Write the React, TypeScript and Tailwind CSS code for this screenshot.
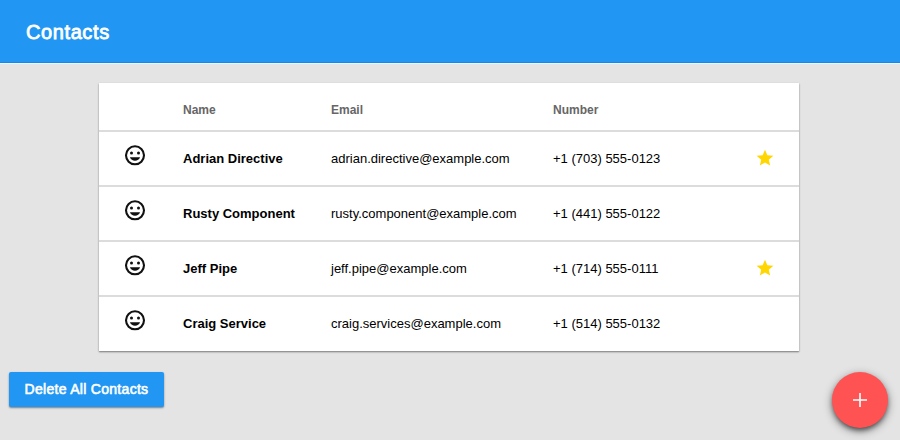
import { MdStar } from "react-icons/md";

interface Contact {
  name: string;
  email: string;
  phone: string;
  favorite: boolean;
}

const contacts: Contact[] = [
  { name: "Adrian Directive", email: "adrian.directive@example.com", phone: "+1 (703) 555-0123", favorite: true },
  { name: "Rusty Component", email: "rusty.component@example.com", phone: "+1 (441) 555-0122", favorite: false },
  { name: "Jeff Pipe", email: "jeff.pipe@example.com", phone: "+1 (714) 555-0111", favorite: true },
  { name: "Craig Service", email: "craig.services@example.com", phone: "+1 (514) 555-0132", favorite: false },
];

const columns = "grid grid-cols-[84px_148px_222px_192px_1fr]";

function Smiley() {
  return (
    <svg viewBox="0 0 24 24" className="mb-[7px] ml-6 size-6 fill-[#111]">
      <circle cx="12" cy="12.3" r="9" fill="none" stroke="#111" strokeWidth="2.1" />
      <circle cx="8.5" cy="9.9" r="1.5" />
      <circle cx="15.5" cy="9.9" r="1.5" />
      <path d="M12 17.8c2.33 0 4.31-1.46 5.11-3.5H6.89c.8 2.04 2.78 3.5 5.11 3.5z" />
    </svg>
  );
}

function ContactRow({ contact }: { contact: Contact }) {
  return (
    <div className={`${columns} h-[55px] items-center border-t-2 border-[#dcdcdc] text-[13px] text-black`}>
      <Smiley />
      <span className="font-bold">{contact.name}</span>
      <span>{contact.email}</span>
      <span>{contact.phone}</span>
      {contact.favorite && <MdStar className="mb-px ml-[10px] size-5 text-[#ffd600]" />}
    </div>
  );
}

export default function App() {
  return (
    <div className="flex h-[440px] w-[900px] flex-col overflow-hidden bg-[#e4e4e4] font-['Liberation_Sans',Arial,sans-serif]">
      <header className="flex h-[63px] shrink-0 items-center border-b border-[#1389ed] bg-[#2196f3] pl-[26px] pt-[2px] shadow-[0_1px_0_#f4f4f4]">
        <h1 className="text-[20px] tracking-[0.6px] text-white [-webkit-text-stroke:0.8px_white]">Contacts</h1>
      </header>
      <main className="ml-[99px] mt-5 h-[268px] w-[700px] shrink-0 bg-white shadow-[0_1px_2px_rgba(0,0,0,0.35),0_1px_1px_rgba(0,0,0,0.15)]">
        <div className={`${columns} h-[47px] items-center pt-[7px] text-[12px] font-bold text-[#666]`}>
          <span />
          <span>Name</span>
          <span>Email</span>
          <span>Number</span>
        </div>
        {contacts.map((c) => (
          <ContactRow key={c.email} contact={c} />
        ))}
      </main>
      <footer className="flex items-start justify-between pl-[9px] pr-[12px] pt-[21px]">
        <button className="h-[35px] w-[155px] rounded-[2px] bg-[#2196f3] text-[14px] tracking-[0.29px] text-white shadow-[0_1px_2px_rgba(0,0,0,0.45)] [-webkit-text-stroke:0.6px_white]">
          Delete All Contacts
        </button>
        <button
          aria-label="Add contact"
          className="flex size-14 items-center justify-center rounded-full bg-[#ff5252] shadow-[0_3px_5px_-1px_rgba(0,0,0,0.5),0_3px_10px_rgba(0,0,0,0.42)]"
        >
          <svg viewBox="0 0 14 14" className="size-[14px]" stroke="#fff" strokeWidth="1.6">
            <path d="M7 0V14M0 7H14" />
          </svg>
        </button>
      </footer>
    </div>
  );
}
